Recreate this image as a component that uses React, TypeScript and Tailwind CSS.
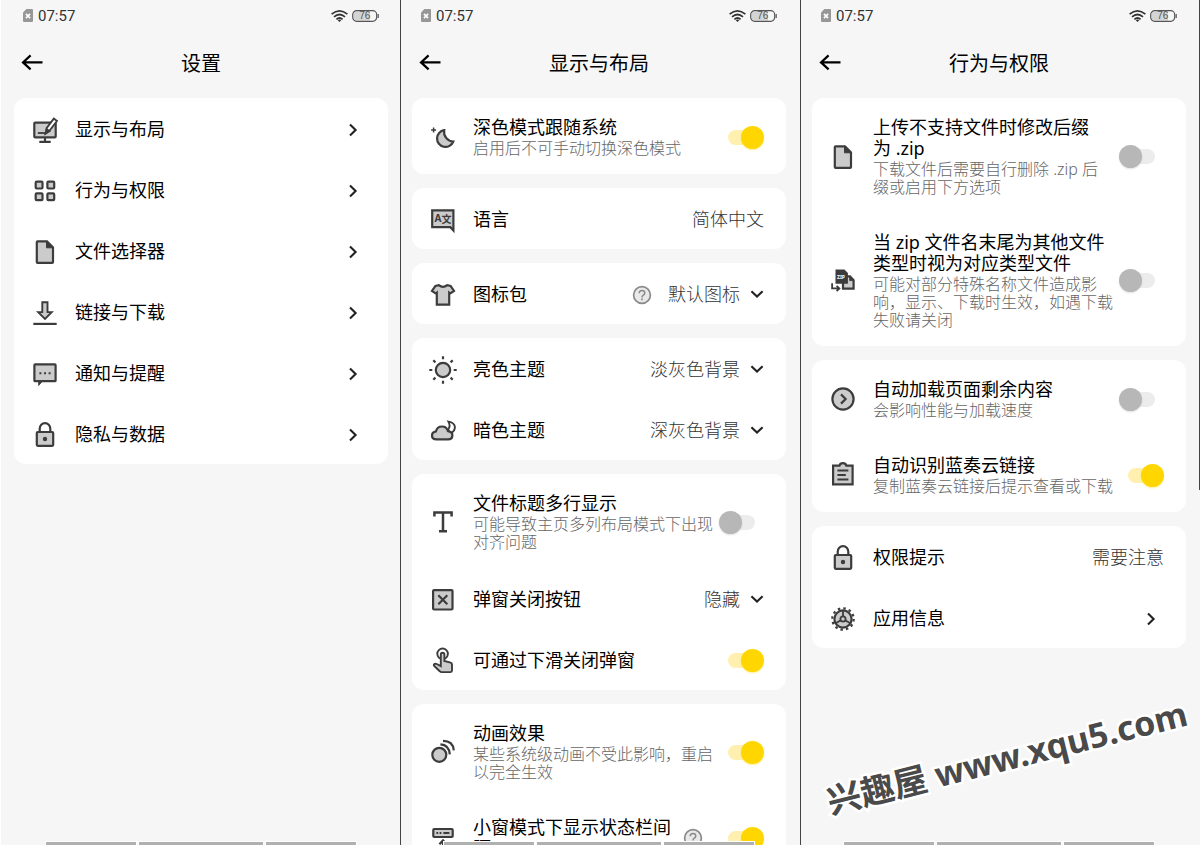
import { useId, useState } from "react";
import type { ReactNode } from "react";

const ICONS: Record<string, ReactNode> = {
  display: (
    <>
      <rect x="3.3" y="6.6" width="21.4" height="14.8" rx="1" />
      <path d="M14 21.5v4M8.3 25.8h11.4" fill="none" />
      <path d="M6.8 17h8" fill="none" strokeWidth="1.8" />
      <path d="M14.6 17.6l1-5.4 7.2-9.6 3.2 2.4-7.4 9.6z" fill="#fff" strokeWidth="1.8" />
      <path d="M14.4 17.8l1.2-5 3.2 2.4z" fill="#3c3c3c" strokeWidth="1.4" />
    </>
  ),
  grid: (
    <>
      <rect x="4.7" y="4.7" width="6.8" height="6.8" rx="1" />
      <rect x="16.4" y="4.7" width="6.8" height="6.8" rx="1" />
      <rect x="4.7" y="16.4" width="6.8" height="6.8" rx="1" />
      <rect x="16.4" y="16.4" width="6.8" height="6.8" rx="1" />
    </>
  ),
  file: (
    <>
      <path d="M5.8 4.2q0-.8.8-.8H16l6 6v14.7q0 .8-.8.8H6.6q-.8 0-.8-.8z" />
      <path d="M15.5 3.6v6.2h6.3z" fill="#3c3c3c" strokeWidth="1" />
    </>
  ),
  download: (
    <>
      <path d="M11.3 3.3h5.2v9.8h4.2L14 20l-6.8-6.9h4.1z" strokeWidth="1.9" />
      <path d="M2.3 24.9h23.4" />
    </>
  ),
  message: (
    <>
      <path d="M3.4 5.2q0-.8.8-.8h19.6q.8 0 .8.8v15.2q0 .8-.8.8H4.2q-.8 0-.8-.8z" />
      <path d="M7.6 21.5v4l3.6-4z" fill="#3c3c3c" strokeWidth=".8" />
      <path d="M8.4 13.2h2M13 13.2h2M17.6 13.2h2" strokeWidth="2" />
    </>
  ),
  lock: (
    <>
      <path d="M8.7 11V7.8a5.3 5.6 0 0 1 10.6 0V11" fill="none" />
      <rect x="5.8" y="11" width="16.4" height="13.8" rx="1" />
      <circle cx="14" cy="18" r="2.2" fill="#3c3c3c" stroke="none" />
    </>
  ),
  moon: (
    <>
      <path d="M15.2 7.2a8.4 8.4 0 1 0 9.1 11.3A9.6 9.6 0 0 1 15.2 7.2z" />
      <path d="M4.6 4.6v5M2.1 7.1h5" fill="none" strokeWidth="1.5" />
    </>
  ),
  language: (
    <>
      <path d="M3.2 4.4h21.2v20l-3-3.2H3.2z" />
      <text x="5.6" y="16.4" fontSize="10" fontWeight="700" fill="#3c3c3c" stroke="none">
        A
      </text>
      <text x="12.4" y="16.6" fontSize="10" fontWeight="700" fill="#3c3c3c" stroke="none">
        文
      </text>
    </>
  ),
  shirt: (
    <path d="M9.8 4.2q4.2 3.2 8.4 0l3.4.8 3.4 5-4 2.6-.8-.8v11.8H7.8V11.8l-.8.8-4-2.6 3.4-5z" />
  ),
  sun: (
    <>
      <circle cx="14" cy="14" r="7.2" />
      <path
        d="M14 .3v3M14 24.7v3M.3 14h3M24.7 14h3M4.3 4.3l2.1 2.1M21.6 21.6l2.1 2.1M4.3 23.7l2.1-2.1M21.6 6.4l2.1-2.1"
        strokeWidth="2.2"
      />
    </>
  ),
  cloud: (
    <>
      <path d="M19.4 4.6q2.6 4.4-.4 8.4l3 3.2q4-2.4 3.9-6.2-.3-4.4-6.5-5.4z" fill="#fff" strokeWidth="1.9" />
      <path d="M7.6 22.4q-4.6 0-4.6-3.9 0-3.4 4-4.1 1-4.9 6-4.9 4.6 0 6 4.6 4.4.8 4.4 4.2 0 4.1-4.4 4.1z" />
    </>
  ),
  text: <path d="M5.4 8.6V4.5h17.2v4.1M14 4.5v18.6M10 23.3h8" fill="none" strokeWidth="2.5" />,
  close: (
    <>
      <rect x="4.1" y="4.1" width="19.4" height="19.4" rx="1" />
      <path d="M9.3 9.3l9 9M18.3 9.3l-9 9" />
    </>
  ),
  touch: (
    <>
      <circle cx="13.6" cy="6.8" r="5.3" fill="none" strokeWidth="1.9" />
      <path
        d="M11.8 7.6q0-1.9 1.8-1.9t1.8 1.9v6.4l6.2 1.6q1.4.5 1.4 2v6q0 1.5-1.5 1.5h-8.8q-1.2 0-2-.9L5 18.6q-.6-1.3.8-1.8 1.1-.3 2 .2l4 2.1z"
        strokeWidth="1.9"
      />
    </>
  ),
  motion: (
    <>
      <circle cx="10.3" cy="16.8" r="7" />
      <path d="M11.4 6.4q8.6.4 9.4 10M14 2.9q10 0 10.8 9.4" fill="none" strokeWidth="2.2" />
    </>
  ),
  statusBar: (
    <>
      <rect x="4.3" y="5" width="19.4" height="8" rx="1" />
      <path d="M7.4 9h1.8M10.6 9h1.8M14.4 9h6" strokeWidth="2" />
      <path d="M14 28V17M10.4 20.2L14 16.4l3.6 3.8" fill="none" />
    </>
  ),
  zip: (
    <>
      <path d="M14 9.4h7l3.6 3.8v8.4H14z" />
      <path d="M7.3 3.3h7.8l3 3v9.6H7.3z" fill="#3c3c3c" strokeWidth="1.6" />
      <path d="M20.6 9v4.6h4.2z" fill="#3c3c3c" strokeWidth=".8" />
      <text x="8" y="11.6" fontSize="5" fontWeight="700" fill="#fff" stroke="none">
        ZIP
      </text>
      <path d="M3.1 16.2v5.2h6.4M7.6 18.8l2.8 2.6-2.8 2.6" fill="none" strokeWidth="1.8" />
    </>
  ),
  next: (
    <>
      <circle cx="14" cy="14" r="10.6" />
      <path d="M12 9.4l4.6 4.6-4.6 4.6" fill="none" />
    </>
  ),
  clipboard: (
    <>
      <path d="M4.1 4.6h6.4q.6-2.4 3.4-2.4t3.4 2.4h6.3v18.8H4.1z" />
      <path d="M8.4 9.4h11M8.4 14h8.4M8.4 18.6h11" strokeWidth="2" />
    </>
  ),
  gear: (
    <>
      <circle cx="14" cy="14" r="8.6" />
      <circle cx="14" cy="14" r="10.7" fill="none" strokeWidth="2.2" strokeDasharray="2.5 3.1" />
      <path d="M14 14V6M14 14l-6.9 4M14 14l6.9 4" strokeWidth="1.8" />
      <circle cx="14" cy="14" r="2.6" strokeWidth="1.8" />
    </>
  ),
};

function Icon({ name }: { name: string }) {
  return (
    <svg
      viewBox="0 0 28 28"
      className="-my-2 h-7 w-7 shrink-0 overflow-visible"
      fill="#cbcbcb"
      stroke="#3c3c3c"
      strokeWidth="2.2"
      aria-hidden="true"
    >
      {ICONS[name]}
    </svg>
  );
}

function StatusBar() {
  return (
    <div className="flex h-[31px] items-center justify-between px-[21px] text-[#333]">
      <div className="flex items-center gap-[5px]">
        <svg viewBox="0 0 10 13" className="h-[13px] w-[10px]" aria-hidden="true">
          <path d="M3.4 0H9q1 0 1 1v11q0 1-1 1H1q-1 0-1-1V3.4z" fill="#979797" />
          <path d="M2.9 4.9l4.2 4.2M7.1 4.9L2.9 9.1" stroke="#fff" strokeWidth="1.6" />
        </svg>
        <span className="font-[Roboto] text-[15px] leading-5">07:57</span>
      </div>
      <div className="flex items-center gap-1">
        <svg viewBox="0 0 17 12" className="h-3 w-[17px]" fill="none" stroke="#333" strokeWidth="1.7" aria-hidden="true">
          <path d="M.6 4.2q7.9-6.6 15.8 0M3 6.8q5.5-4.6 11 0M5.4 9.3q3.1-2.6 6.2 0" />
          <path d="M6.7 10.2q1.8-1.3 3.6 0L8.5 12z" fill="#333" stroke="none" />
        </svg>
        <svg viewBox="0 0 27 12" className="h-3 w-[27px]" aria-hidden="true">
          <path d="M5 1.6h13v8.8H5q-3.4 0-3.4-3.4V5q0-3.4 3.4-3.4z" fill="#d4d4d4" />
          <rect x=".7" y=".7" width="24" height="10.6" rx="4" fill="none" stroke="#555" strokeWidth="1.2" />
          <path d="M26.2 4v4" stroke="#555" strokeWidth="1.2" />
          <text x="12.8" y="9.4" fontSize="10" textAnchor="middle" fill="#555" fontFamily="Liberation Sans">
            76
          </text>
        </svg>
      </div>
    </div>
  );
}

type Page = { title: string; shift: string; children: ReactNode };

function Screen({ title, shift, children }: Page) {
  return (
    <section className={`h-screen bg-[#f6f6f6] ${shift}`}>
      <div className="relative h-full overflow-hidden">
        <StatusBar />
        <header className="grid h-[63px] grid-cols-[60px_1fr_60px] items-center">
          <button type="button" aria-label="返回" className="flex h-10 items-center pl-[19px]">
            <svg viewBox="0 0 22 18" className="h-[18px] w-[22px]" fill="none" stroke="#000" strokeWidth="2.2" aria-hidden="true">
              <path d="M21.5 8.4H2M9.6 1.4L2 8.4l7.6 7" />
            </svg>
          </button>
          <h1 className="pt-0.5 text-center text-[20px] leading-7 text-black">{title}</h1>
        </header>
        <main className="flex flex-col gap-[14px] px-3 pt-1">{children}</main>
        <div className="absolute inset-x-0 bottom-0 flex h-[3px] gap-[3px] px-11">
          <span className="flex-[90] bg-[#b0b0b0] outline outline-white" />
          <span className="flex-[125] bg-[#b0b0b0] outline outline-white" />
          <span className="flex-[90] bg-[#b0b0b0] outline outline-white" />
        </div>
      </div>
    </section>
  );
}

function Card({ children }: { children: ReactNode }) {
  return <div className="rounded-[12px] bg-white">{children}</div>;
}

const ROW = "flex min-h-[61px] items-center gap-4 pt-[19px] pb-[17px] pl-[17px] pr-[22px]";

function RowText({ title, desc }: { title: string; desc?: string }) {
  return (
    <span className="min-w-0 flex-1 whitespace-pre">
      <span className="block text-[18px] leading-[21px] text-black">{title}</span>
      {desc && <span className="mt-px block text-[16px] leading-[18px] font-light text-[#666]">{desc}</span>}
    </span>
  );
}

function LinkRow({ icon, title }: { icon: string; title: string }) {
  return (
    <a href="#" className={ROW}>
      <Icon name={icon} />
      <RowText title={title} />
      <svg viewBox="0 0 24 24" className="-my-1 h-6 w-6 shrink-0" fill="none" stroke="#222" strokeWidth="2.1" aria-hidden="true">
        <path d="M8 6.5l5.6 5.5L8 17.5" />
      </svg>
    </a>
  );
}

function ValueRow({ icon, title, value }: { icon: string; title: string; value: string }) {
  return (
    <a href="#" className={ROW}>
      <Icon name={icon} />
      <RowText title={title} />
      <span className="text-[18px] leading-[21px] font-light text-[#333]">{value}</span>
    </a>
  );
}

function Help() {
  return (
    <button type="button" aria-label="帮助" className="shrink-0">
      <svg viewBox="0 0 20 20" className="h-5 w-5" fill="none" stroke="#8a8a8a" strokeWidth="1.7" aria-hidden="true">
        <circle cx="10" cy="10" r="8.4" fill="#e9e9e9" />
        <path d="M7.2 8.2q0-2.8 2.8-2.8t2.8 2.6q0 1.4-1.5 2.2-1.3.7-1.3 2.2" strokeWidth="1.5" />
        <path d="M10 13.6v1.6" />
      </svg>
    </button>
  );
}

type SelectRowProps = { icon: string; title: string; options: string[]; help?: boolean };

function SelectRow({ icon, title, options, help }: SelectRowProps) {
  const id = useId();
  return (
    <div className={ROW}>
      <Icon name={icon} />
      <label htmlFor={id} className="flex flex-1">
        <RowText title={title} />
      </label>
      {help && <Help />}
      <span className="flex items-center gap-[10px]">
        <select
          id={id}
          className="field-sizing-content appearance-none bg-transparent text-[18px] leading-[21px] font-light text-[#333]"
        >
          {options.map((o) => (
            <option key={o}>{o}</option>
          ))}
        </select>
        <svg viewBox="0 0 14 14" className="pointer-events-none h-[14px] w-[14px] shrink-0" fill="none" stroke="#222" strokeWidth="2.1" aria-hidden="true">
          <path d="M1.4 3.2L7 8.6l5.6-5.4" />
        </svg>
      </span>
    </div>
  );
}

type ToggleRowProps = { icon: string; title: string; desc?: string; on?: boolean; help?: boolean };

function ToggleRow({ icon, title, desc, on = false, help }: ToggleRowProps) {
  const id = useId();
  const [checked, setChecked] = useState(on);
  return (
    <div className={ROW}>
      <Icon name={icon} />
      <label htmlFor={id} className="flex min-w-0 flex-1">
        <RowText title={title} desc={desc} />
      </label>
      {help && <Help />}
      <input
        id={id}
        type="checkbox"
        checked={checked}
        onChange={(e) => setChecked(e.target.checked)}
        className="relative -my-1 h-[23px] w-[45px] shrink-0 appearance-none before:absolute before:top-1 before:left-[9px] before:h-[15px] before:w-[27px] before:rounded-full before:bg-[#ececec] after:absolute after:top-0 after:left-0 after:h-[23px] after:w-[23px] after:rounded-full after:bg-[#b7b7b7] after:shadow-[0_1px_2px_rgba(0,0,0,0.12)] checked:before:bg-[#fff0b0] checked:after:left-[22px] checked:after:bg-[#ffd600] checked:after:shadow-[0_1px_2px_rgba(255,214,0,0.4)]"
      />
    </div>
  );
}

export default function App() {
  return (
    <div
      lang="zh-CN"
      className="relative grid h-screen grid-cols-3 overflow-hidden font-['Noto_Sans','Noto_Sans_CJK_SC',sans-serif]"
    >
      <Screen title="设置" shift="pl-[2px] shadow-[inset_1px_0_0_#fff]">
        <Card>
          <LinkRow icon="display" title="显示与布局" />
          <LinkRow icon="grid" title="行为与权限" />
          <LinkRow icon="file" title="文件选择器" />
          <LinkRow icon="download" title="链接与下载" />
          <LinkRow icon="message" title="通知与提醒" />
          <LinkRow icon="lock" title="隐私与数据" />
        </Card>
      </Screen>

      <Screen title="显示与布局" shift="pr-[2px] shadow-[inset_1px_0_0_#444]">
        <Card>
          <ToggleRow icon="moon" title="深色模式跟随系统" desc="启用后不可手动切换深色模式" on />
        </Card>
        <Card>
          <ValueRow icon="language" title="语言" value="简体中文" />
        </Card>
        <Card>
          <SelectRow icon="shirt" title="图标包" options={["默认图标"]} help />
        </Card>
        <Card>
          <SelectRow icon="sun" title="亮色主题" options={["淡灰色背景"]} />
          <SelectRow icon="cloud" title="暗色主题" options={["深灰色背景"]} />
        </Card>
        <Card>
          <ToggleRow icon="text" title="文件标题多行显示" desc={"可能导致主页多列布局模式下出现\n对齐问题"} />
          <SelectRow icon="close" title="弹窗关闭按钮" options={["隐藏"]} />
          <ToggleRow icon="touch" title="可通过下滑关闭弹窗" on />
        </Card>
        <Card>
          <ToggleRow icon="motion" title="动画效果" desc={"某些系统级动画不受此影响，重启\n以完全生效"} on />
          <ToggleRow icon="statusBar" title={"小窗模式下显示状态栏间\n隔"} on help />
        </Card>
      </Screen>

      <Screen title="行为与权限" shift="pr-[2px] shadow-[inset_1px_0_0_#444]">
        <Card>
          <ToggleRow
            icon="file"
            title={"上传不支持文件时修改后缀\n为 .zip"}
            desc={"下载文件后需要自行删除 .zip 后\n缀或启用下方选项"}
          />
          <ToggleRow
            icon="zip"
            title={"当 zip 文件名末尾为其他文件\n类型时视为对应类型文件"}
            desc={"可能对部分特殊名称文件造成影\n响，显示、下载时生效，如遇下载\n失败请关闭"}
          />
        </Card>
        <Card>
          <ToggleRow icon="next" title="自动加载页面剩余内容" desc="会影响性能与加载速度" />
          <ToggleRow icon="clipboard" title="自动识别蓝奏云链接" desc="复制蓝奏云链接后提示查看或下载" on />
        </Card>
        <Card>
          <ValueRow icon="lock" title="权限提示" value="需要注意" />
          <LinkRow icon="gear" title="应用信息" />
        </Card>
        <p className="absolute right-1.5 bottom-16 -rotate-[14deg] text-[34px] leading-[48px] font-bold whitespace-nowrap text-[#4a4a4a] [-webkit-text-stroke:5px_#fff] [paint-order:stroke_fill]">
          兴趣屋 www.xqu5.com
        </p>
      </Screen>

      <span className="absolute top-0 right-0 h-[58%] w-px bg-[#444]" />
    </div>
  );
}
